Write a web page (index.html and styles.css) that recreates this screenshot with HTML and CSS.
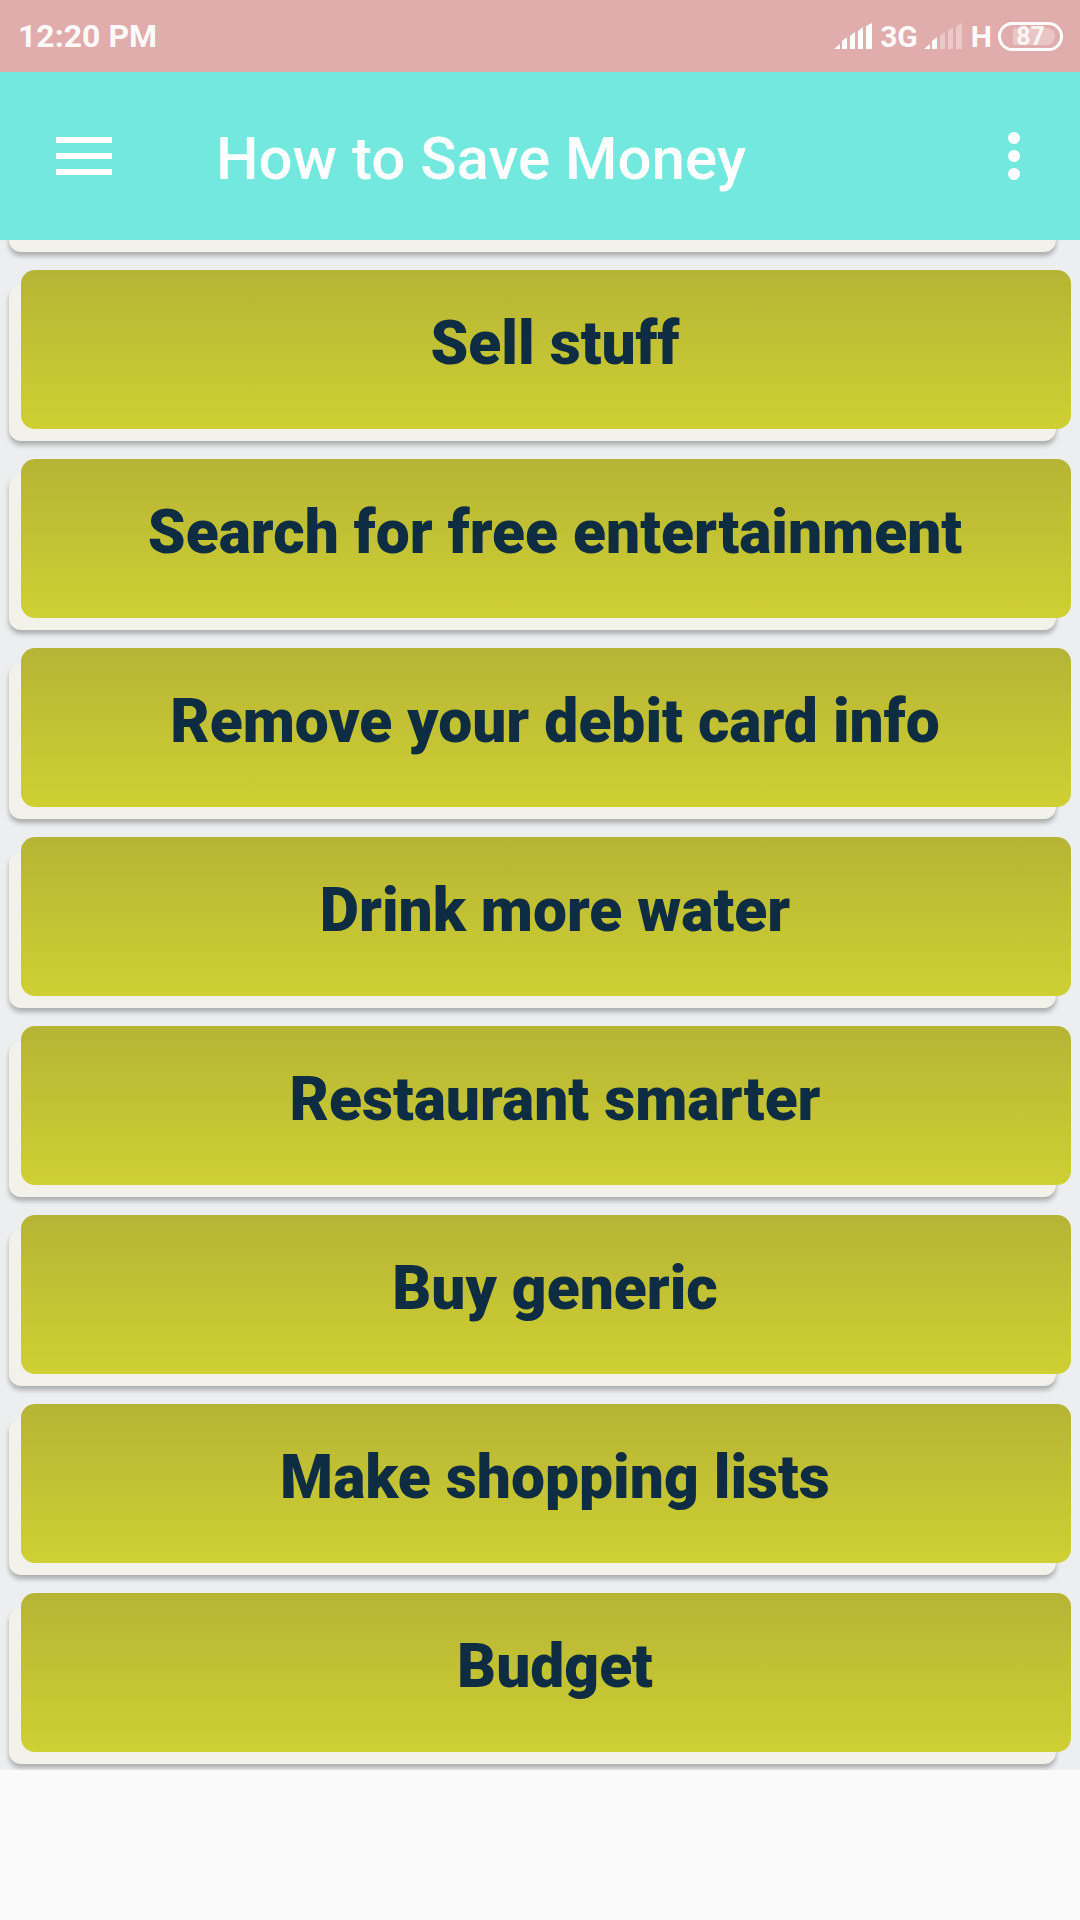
FILE: index.html
```html
<!DOCTYPE html>
<html lang="en">
<head>
<meta charset="utf-8">
<title>How to Save Money</title>
<link rel="stylesheet" href="styles.css">
</head>
<body>
<div class="app">
  <header class="status-bar">
    <span class="clock">12:20 PM</span>
    <div class="status-icons">
      <svg class="signal" width="40" height="28" viewBox="0 0 40 28">
        <path fill="#fff" d="M1 27l6-5v5zM9 27v-8l5-4v12zM17 27V14l5-4v17zM25 27V9l5-4v22zM33 27V4l6-3v26z"/>
      </svg>
      <span class="net net-3g">3G</span>
      <svg class="signal" width="40" height="28" viewBox="0 0 40 28">
        <path fill="#fff" d="M1 27l6-5v5zM9 27v-8l5-4v12z"/>
        <path fill="#fff" opacity=".35" d="M17 27V14l5-4v17zM25 27V9l5-4v22zM33 27V4l6-3v26z"/>
      </svg>
      <span class="net net-h">H</span>
      <div class="battery">
        <div class="battery-level"></div>
        <span class="battery-text">87</span>
      </div>
    </div>
  </header>
  <nav class="app-bar">
    <div class="menu-icon"><i></i><i></i><i></i></div>
    <h1 class="title">How to Save Money</h1>
    <div class="more-icon"><i></i><i></i><i></i></div>
  </nav>
  <main class="list">
    <div class="list-track">
      <div class="item"><div class="face"></div></div>
      <div class="item"><div class="face"><span>Sell stuff</span></div></div>
      <div class="item"><div class="face"><span>Search for free entertainment</span></div></div>
      <div class="item"><div class="face"><span>Remove your debit card info</span></div></div>
      <div class="item"><div class="face"><span>Drink more water</span></div></div>
      <div class="item"><div class="face"><span>Restaurant smarter</span></div></div>
      <div class="item"><div class="face"><span>Buy generic</span></div></div>
      <div class="item"><div class="face"><span>Make shopping lists</span></div></div>
      <div class="item"><div class="face"><span>Budget</span></div></div>
    </div>
  </main>
</div>
</body>
</html>
```
FILE: styles.css
```css
* { box-sizing: border-box; }
html, body { margin: 0; padding: 0; }
body {
  width: 1080px;
  height: 1920px;
  background: #fafafa;
  font-family: Roboto, "Liberation Sans", sans-serif;
  overflow: hidden;
}
.app { display: flex; flex-direction: column; height: 1920px; }

.status-bar {
  height: 72px;
  background: #e1acac;
  color: #fff;
  display: flex;
  align-items: center;
  justify-content: space-between;
  padding: 0 17px 0 18px;
  flex: none;
}
.clock { font-size: 32px; font-weight: 700; line-height: 74px; opacity: .95; }
.status-icons { display: flex; align-items: center; }
.net { font-size: 30px; font-weight: 700; line-height: 38px; opacity: .95; }
.net-3g { margin: 2px 5px 0 7px; }
.net-h { margin: 2px 6px 0 8px; }
.signal { display: block; }
.battery {
  position: relative;
  width: 65px;
  height: 29px;
  border: 3px solid #fff;
  border-radius: 15px;
  display: flex;
  align-items: center;
  justify-content: center;
}
.battery-level {
  position: absolute;
  left: 12px;
  top: 3px;
  bottom: 3px;
  width: 42px;
  background: rgba(255,255,255,.3);
  border-radius: 2px 8px 8px 2px;
}
.battery-text { position: relative; font-size: 25px; font-weight: 700; line-height: 23px; opacity: .85; }

.app-bar {
  height: 168px;
  background: #72e8df;
  color: #fff;
  display: flex;
  align-items: center;
  flex: none;
  position: relative;
  z-index: 2;
  padding: 0 0 0 56px;
}
.menu-icon { width: 56px; display: flex; flex-direction: column; gap: 10px; }
.menu-icon i { display: block; height: 6px; background: #fff; }
.title { margin: 5px 0 0 104px; font-size: 60px; font-weight: 500; line-height: 72px; flex: 1; }
.more-icon { width: 12px; margin-right: 60px; display: flex; flex-direction: column; gap: 6px; }
.more-icon i { display: block; width: 12px; height: 12px; border-radius: 50%; background: #fff; }

.list {
  height: 1530px;
  flex: none;
  background: #eceef0;
  overflow: hidden;
}
.list-track { margin-top: -144px; padding-left: 9px; display: flex; flex-direction: column; gap: 33px; }
.item {
  width: 1047px;
  height: 156px;
  display: flow-root;
  flex: none;
  background: #f2f1ea;
  border-radius: 12px;
  box-shadow: 0 4px 5px rgba(0,0,0,.28);
}
.face {
  width: 1050px;
  height: 159px;
  margin: -15px 0 0 12px;
  border-radius: 14px;
  background: linear-gradient(to bottom, #b6b435, #cfd033);
  display: flex;
  justify-content: center;
  padding: 0 0 12px 18px;
  align-items: center;
  color: #0e2d42;
  font-size: 60.5px;
  font-weight: 900;
  line-height: 70px;
  white-space: nowrap;
}
```
